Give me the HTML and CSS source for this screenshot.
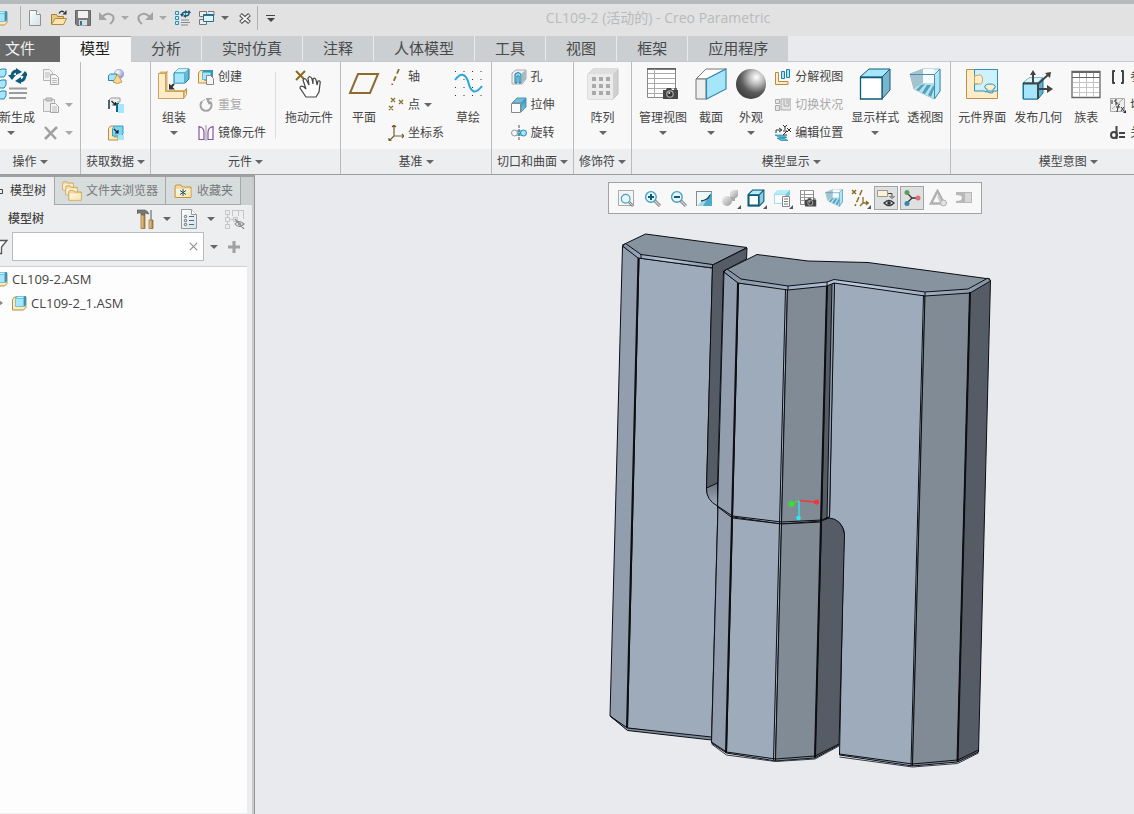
FILE: index.html
```
<!DOCTYPE html>
<html lang="zh-CN">
<head>
<meta charset="utf-8">
<title>CL109-2 (活动的) - Creo Parametric</title>
<link rel="stylesheet" href="styles.css">
</head>
<body>
<svg class="defs" aria-hidden="true">
  <defs>
    <linearGradient id="gFace" x1="0" y1="0" x2="1" y2="1"><stop offset="0" stop-color="#d3f3fd"/><stop offset="1" stop-color="#6fd0f0"/></linearGradient>
    <linearGradient id="gSide" x1="0" y1="0" x2="0" y2="1"><stop offset="0" stop-color="#2b8fb8"/><stop offset="1" stop-color="#8cc9e0"/></linearGradient>
    <linearGradient id="gGrey" x1="0" y1="0" x2="1" y2="1"><stop offset="0" stop-color="#f5f5f5"/><stop offset="1" stop-color="#9a9a9a"/></linearGradient>
    <linearGradient id="gPaper" x1="0" y1="0" x2="1" y2="1"><stop offset="0" stop-color="#fff"/><stop offset="1" stop-color="#cfe2ea"/></linearGradient>
    <linearGradient id="gWood" x1="0" y1="0" x2="1" y2="0"><stop offset="0" stop-color="#f4d9a2"/><stop offset="1" stop-color="#a8762f"/></linearGradient>
    <linearGradient id="gCream" x1="0" y1="0" x2="1" y2="1"><stop offset="0" stop-color="#fff8e6"/><stop offset="1" stop-color="#ffe1a0"/></linearGradient>
    <radialGradient id="gBall" cx=".68" cy=".28" r=".8"><stop offset="0" stop-color="#fff"/><stop offset=".25" stop-color="#c8c8c8"/><stop offset=".65" stop-color="#5a5a5a"/><stop offset="1" stop-color="#3c3c3c"/></radialGradient>
    <radialGradient id="gOrb" cx=".35" cy=".3" r=".8"><stop offset="0" stop-color="#fff"/><stop offset="1" stop-color="#7d88cc"/></radialGradient>
    <linearGradient id="gBevel" x1="0" y1="0" x2="1" y2="0"><stop offset="0" stop-color="#8391a5"/><stop offset=".5" stop-color="#bccbe2"/><stop offset="1" stop-color="#8592a5"/></linearGradient>
    <linearGradient id="gFillet" x1="0" y1="0" x2="0" y2="1"><stop offset="0" stop-color="#6c7480"/><stop offset="1" stop-color="#a0acbb"/></linearGradient>
    <symbol id="asm" viewBox="0 0 16 16"><path d="M1.500 4.500l2-2.500H15v10.500l-2.500 2.500h-11z" fill="#ffe9bd" stroke="#b98d3e"/><path d="M4 3l2-2h9v9l-2 2z" fill="#3a93b8"/><path d="M4.500 3.500h8v8h-8z" fill="#a5e6fb" stroke="#6fc6e2"/><path d="M5 3l1.500-1.500h7L12 3z" fill="#c9f2ff"/></symbol>
    <symbol id="cube" viewBox="0 0 16 16"><path d="M1 5l4-4h10v10l-4 4H1z" fill="#8ccbe0" stroke="#0f5a78"/><path d="M1.500 5.500h9v9h-9z" fill="#fff" stroke="#0f5a78" stroke-width="1.500"/><path d="M2.500 4.500l3-3h8l-3 3z" fill="#b5ecff"/><path d="M11 5l4-4" stroke="#0f5a78"/></symbol>
    <symbol id="camera" viewBox="0 0 16 12"><path d="M0 3h3l1-2h4l1 2h6v9H0z" fill="#474747"/><path d="M11 1h3v2h-3z" fill="#666"/><circle cx="7" cy="7" r="3.800" fill="#aaa"/><circle cx="7" cy="7" r="2.600" fill="#333"/><circle cx="6.300" cy="6" r="1" fill="#ddd"/></symbol>
    <symbol id="persp" viewBox="0 0 32 32"><path d="M1 6L14 1h17v22l-6 8-16-8-4-2z" fill="#e4f4f9" stroke="#8dbccb"/><path d="M1 6l13-5v14L5 21z" fill="#a5c3ce"/><path d="M14 1h11v14H14z" fill="#f6fbfd"/><path d="M5 21l9-6h14l-3 16z" fill="#b7dfec"/><path d="M12 17l-5 5 3 1 6-7zM18 17l-5 8 3 1 6-9zM24 18l-5 9 3 2 4-11z" fill="#4fa2bf"/><path d="M25 8l6-6v21l-6 8z" fill="#a9e0f2" opacity=".8"/><path d="M1 6.500h24.500V31L31 23V1L25.500 6.500" stroke="#3f90ae" fill="none"/></symbol>
    <symbol id="copy" viewBox="0 0 16 16"><path d="M.5.500h6l3 3v8h-9z" fill="#f4f4f4" stroke="#b5b5b5"/><path d="M2 4h5M2 6h5M2 8h4" stroke="#bbb"/><path d="M7.500 5.500h5l3 3v7h-8z" fill="#f4f4f4" stroke="#a6a6a6"/><path d="M9 9.500h5M9 11.500h5M9 13.500h5" stroke="#bbb"/></symbol>
    <symbol id="mag" viewBox="0 0 16 16"><path d="M10 10l5 5" stroke="#8a8a8a" stroke-width="3"/><path d="M10 10l5 5" stroke="#ddd"/><circle cx="6.500" cy="6.500" r="5" fill="#e3f6fc" stroke="#4a9dbb" stroke-width="1.300"/></symbol>
    <symbol id="folder" viewBox="0 0 18 14"><path d="M1 13V1.500L2 .5h5l1.500 2H17V13z" fill="#f3d9a2" stroke="#c19746"/><path d="M2 12.500V4.500h14.500v8z" fill="url(#gCream)"/></symbol>
  </defs>
</svg>
<div class="app">
  <header class="titlebar">
    <div class="quick">
      <svg class="i16"><use href="#asm"/></svg>
      <span class="vline"></span>
      <button aria-label="新建"><svg class="i16" viewBox="0 0 16 16"><path d="M2.500.500h7l4 4v11h-11z" fill="url(#gPaper)" stroke="#8f8f8f"/><path d="M9.500.500v4h4" fill="#fff" stroke="#8f8f8f"/></svg></button>
      <button aria-label="打开"><svg class="i16" viewBox="0 0 16 16"><path d="M.5 14V4.500h5l1 2h6V9" fill="#e9c988" stroke="#a8812f"/><path d="M.5 14.500L4 8.500h11.500l-3 6z" fill="#ffe4ad" stroke="#b18a3d"/><path d="M8 3.500Q10 0 13 2" fill="none" stroke="#333" stroke-width="1.300"/><path d="M15.500 0v4.500h-4z" fill="#333"/></svg></button>
      <button aria-label="保存"><svg class="i16" viewBox="0 0 16 16"><path d="M.5.500h15v15H2l-1.500-1.500z" fill="#7c7c7c" stroke="#666"/><path d="M3 1h10v7H3z" fill="#f1f1f1"/><path d="M4 10h8v5.500H4z" fill="#d4dfe3"/><path d="M5 11h2v4H5z" fill="#34748d"/></svg></button>
      <button aria-label="撤消" class="split"><svg class="i16" viewBox="0 0 16 16"><path d="M3 7Q9 1 14 6q2 4-3 8" fill="none" stroke="#a3a3a3" stroke-width="2"/><path d="M0 2v8h8z" fill="#a3a3a3"/></svg><i class="arrow light"></i></button>
      <button aria-label="重做" class="split"><svg class="i16" viewBox="0 0 16 16"><path d="M13 7Q7 1 2 6q-2 4 3 8" fill="none" stroke="#a3a3a3" stroke-width="2"/><path d="M16 2v8H8z" fill="#a3a3a3"/></svg><i class="arrow light"></i></button>
      <button aria-label="重新生成"><svg class="i16" viewBox="0 0 16 16"><g fill="#c8f0fb" stroke="#2a8fb5"><path d="M.5 1.500h3v3h-3zM.5 6.500h3v3h-3zM.5 11.500h3v3h-3z"/></g><path d="M6 10h8M6 12.500h9M6 15h7" stroke="#888"/><path d="M7 5q0-3 4-3M14 3q0 3-4 3" stroke="#11597a" stroke-width="1.500" fill="none"/><path d="M10 0l3 2-3 2zM11 4v4L8 6zM5 4h4L7 7zM12 3h4l-2-3z" fill="#11597a"/></svg></button>
      <button aria-label="窗口" class="split"><svg class="i16" viewBox="0 0 16 16"><path d="M.5 1.500h7v5h-7zM.5 9.500h7v5h-7zM9 1.500h6v4" fill="#eee" stroke="#777"/><path d="M4.500 4.500h10v7h-10z" fill="#d9f5fd" stroke="#2b6f8a"/><path d="M4.500 5h10" stroke="#2b6f8a" stroke-width="2"/></svg><i class="arrow"></i></button>
      <button aria-label="关闭"><svg class="i16" viewBox="0 0 16 16"><path d="M3.500 4.500l9 8M12.500 4.500l-9 8" stroke="#444" stroke-width="4"/><path d="M4 5l8 7M12 5l-8 7" stroke="#f3f3f3" stroke-width="2"/></svg></button>
      <span class="vline near"></span>
      <button aria-label="自定义快速访问工具栏" class="custom"><i class="arrow"></i></button>
    </div>
    <h1>CL109-2 (活动的) - Creo Parametric</h1>
  </header>

  <nav class="tabs">
    <button class="file">文件</button><button class="active">模型</button><button>分析</button><button>实时仿真</button><button>注释</button><button>人体模型</button><button>工具</button><button>视图</button><button>框架</button><button>应用程序</button>
  </nav>

  <section class="ribbon">
    <div class="group">
      <div class="tools">
        <button class="big"><svg class="i32" viewBox="0 0 32 32"><g fill="#a5e6fb" stroke="#2788af"><path d="M8 3l2-2h5v5l-2 3H8zM8 14l2-2h5v5l-2 3H8zM8 25l2-2h5v5l-2 3H8z" transform="translate(-4)"/></g><path d="M17 7q1-4 5-4M30 8q-1 5-5 5" fill="none" stroke="#0f5a78" stroke-width="3"/><path d="M21 0l6 4-6 3zM26 9v7l-6-3zM13 7h8l-4 5zM26 8h8l-4-5z" fill="#0f5a78"/><path d="M14 20.500h19M14 25h19M14 30h17" stroke="#9b9b9b" stroke-width="2"/></svg><span>重新生成</span><i class="arrow"></i></button>
        <div class="stack">
          <button aria-label="复制"><svg class="i16"><use href="#copy"/></svg></button>
          <button aria-label="粘贴" class="split"><svg class="i16" viewBox="0 0 16 16"><path d="M.5 2.500h11v12H.5z" fill="#eee" stroke="#b5b5b5"/><path d="M3 1h6v3H3z" fill="#ccc" stroke="#aaa"/><path d="M7.500 6.500h5l3 3v6h-8z" fill="#f4f4f4" stroke="#a6a6a6"/><path d="M9 10h5M9 12h5M9 14h5" stroke="#bbb"/></svg><i class="arrow light"></i></button>
          <button aria-label="删除" class="split"><svg class="i16" viewBox="0 0 16 16"><path d="M2 2l11 12M14 2L2 14" stroke="#a0a0a0" stroke-width="2.500"/></svg><i class="arrow light"></i></button>
        </div>
      </div>
      <button class="caption">操作<i class="arrow"></i></button>
    </div>
    <div class="group">
      <div class="tools center">
        <div class="stack">
          <button aria-label="用户定义特征"><svg class="i16" viewBox="0 0 16 16"><circle cx="11" cy="5" r="4.700" fill="url(#gOrb)" stroke="#8d95cc" stroke-width=".6"/><path d="M.5 6.500l2-1.500h6v5L7 11.500H.5z" fill="#a5e6fb" stroke="#2788af"/><path d="M9.500 5L5 13q4 3 9 0z" fill="#f6d793" stroke="#b98d3e" stroke-width=".8"/></svg></button>
          <button aria-label="复制几何"><svg class="i16" viewBox="0 0 16 16"><path d="M1 12V3l2-2h9v4H9" fill="#eee" stroke="#999"/><path d="M1 3v9" stroke="#29434f" stroke-width="1.500"/><path d="M3.500 4l4 4M7.500 5v3h-3" stroke="#222" stroke-width="1.200" fill="none"/><path d="M8 6h3v9H8z" fill="#0e6587"/><path d="M10 7h6v9h-6z" fill="#a5e6fb"/></svg></button>
          <button aria-label="收缩包络"><svg class="i16" viewBox="0 0 16 16"><path d="M.5 3.500l2-2.500h4v11H10v3H.5z" fill="#ffeac4" stroke="#b98d3e"/><path d="M4.500 3.500l2-2.500H15v8l-2 2H4.500z" fill="#7bd6f2" stroke="#3d9cbe"/><path d="M6 4l4 4M10 5v3H7" stroke="#222" stroke-width="1.200" fill="none"/><path d="M10 10h6v5h-6z" fill="#a5e6fb"/></svg></button>
        </div>
      </div>
      <button class="caption">获取数据<i class="arrow"></i></button>
    </div>
    <div class="group">
      <div class="tools">
        <button class="big"><svg class="i32" viewBox="0 0 32 32"><path d="M.5 5.500l2-2h7v18.500H28l-2 9H.5z" fill="#d9b26a"/><path d="M.5 5.500h7v18h18v7H.5z" fill="#ffecc6" stroke="#c9a45f"/><path d="M7.500 5.500l2-2M25.500 23.500l3-3v6l-3 4" fill="none" stroke="#bb9144"/><path d="M16 5l4-4h11v10l-4 4H16z" fill="#6bb7d2" stroke="#1d7898"/><path d="M16.500 5h10v10h-10z" fill="#a5e6fb" stroke="#4bb6d8"/><path d="M17 4l3-3h10l-3 3z" fill="#c9f2ff"/><path d="M16 16l-4 4" stroke="#333" stroke-width="2"/><path d="M11 15.500v6h6z" fill="#333"/></svg><span>组装</span><i class="arrow"></i></button>
        <div class="stack">
          <button><svg class="i16" viewBox="0 0 16 16"><path d="M.5 4l2-2.500h4v10H9V14H.5z" fill="#ffeac4" stroke="#b98d3e"/><path d="M4 3l2-2h9v8l-2 2H4z" fill="#3a93b8"/><path d="M4.500 3.500h8v7h-8z" fill="#a5e6fb" stroke="#5fbcdb"/><path d="M8.500 6.500h4l3 3v6h-7z" fill="#f5f5f5" stroke="#888"/></svg>创建</button>
          <button class="off"><svg class="i16" viewBox="0 0 16 16"><path d="M4 4.500A5.500 5.500 0 1 0 12 4.500" fill="none" stroke="#a3a3a3" stroke-width="2"/><path d="M8 1h6v1.500h-3L12.500 7l-2 .5L8.500 3z" fill="#a3a3a3"/><path d="M4 5q1-2 3-2.500" fill="none" stroke="#b5b5b5"/></svg>重复</button>
          <button><svg class="i16" viewBox="0 0 16 16"><path d="M1 1.500q5 1 5 6v7H1zM15 1.500q-5 1-5 6v7h5z" fill="#fff" stroke="#8a52a5" stroke-width="1.200"/><path d="M8 0v16" stroke="#999"/></svg>镜像元件</button>
        </div>
        <span class="inner"></span>
        <button class="big"><svg class="i32" viewBox="0 0 32 32"><path d="M3 3l9 9M12 3l-9 9" stroke="#8a6c1f" stroke-width="2"/><path d="M13 29L7 20q0-3 4-1l2 2-3-9q2-3 4 1l2 4-1-7q2-3 4 1l1 5v-5q2-2 3 1l1 5 1-4q3-1 2 3l-1 8-3 5z" fill="#fff" stroke="#444" stroke-width="1.200"/></svg><span>拖动元件</span></button>
      </div>
      <button class="caption">元件<i class="arrow"></i></button>
    </div>
    <div class="group">
      <div class="tools">
        <button class="big"><svg class="i32" viewBox="0 0 32 32"><path d="M10 6h20l-8 19H2z" fill="none" stroke="#8c6b2c" stroke-width="2"/></svg><span>平面</span></button>
        <div class="stack">
          <button><svg class="i16" viewBox="0 0 16 16"><path d="M11 0L4 16" stroke="#8a6c2a" stroke-width="1.800" stroke-dasharray="5 3"/></svg>轴</button>
          <button><svg class="i16" viewBox="0 0 16 16"><path d="M3 1l4 4M7 1L3 5M11 3l4 4M15 3l-4 4M1 9l4 4M5 9l-4 4" stroke="#8a6c2a" stroke-width="1.300"/></svg>点<i class="arrow"></i></button>
          <button><svg class="i16" viewBox="0 0 16 16"><path d="M6 0v11h10M6 11l-5 5M4 2l2-2 2 2M14 9l2 2-2 2M1 13v3h3" fill="none" stroke="#71602f" stroke-width="1.200"/></svg>坐标系</button>
        </div>
        <button class="big"><svg class="i32" viewBox="0 0 32 32"><path d="M3 3.500h28M3 11.500h28M3 19.500h28M3 27.500h28" stroke="#333" stroke-dasharray="1 7.500"/><path d="M3 12Q11 1 16 13q4 18 14 5" fill="none" stroke="#29a7db" stroke-width="2"/></svg><span>草绘</span></button>
      </div>
      <button class="caption">基准<i class="arrow"></i></button>
    </div>
    <div class="group">
      <div class="tools center">
        <div class="stack">
          <button><svg class="i16" viewBox="0 0 16 16"><path d="M1 4l4-3h10v9l-4 5H1z" fill="#eee" stroke="#aaa"/><path d="M11 4l4-3v9l-4 4z" fill="#a8bcc4"/><path d="M4 5q3-3 6 0v9H8V7H6v7H4z" fill="#8be0f7" stroke="#15789c"/></svg>孔</button>
          <button><svg class="i16" viewBox="0 0 16 16"><path d="M1 6l5-5h9L10 6z" fill="#73bddb" stroke="#4797b6"/><path d="M10 6l5-5v9l-5 5z" fill="url(#gSide)" stroke="#4797b6"/><path d="M.5 6.500h9v9h-9z" fill="#fafafa" stroke="#888"/></svg>拉伸</button>
          <button><svg class="i16" viewBox="0 0 16 16"><path d="M3 5h10v6H3z" fill="#72c7e2"/><circle cx="3.500" cy="8" r="3" fill="#f5f5f5" stroke="#8b9ba2"/><circle cx="12.500" cy="8" r="3" fill="#a5e6fb" stroke="#2788af"/><path d="M8 0v16" stroke="#555" stroke-dasharray="3 1"/></svg>旋转</button>
        </div>
      </div>
      <button class="caption">切口和曲面<i class="arrow"></i></button>
    </div>
    <div class="group">
      <div class="tools center">
        <button class="big"><svg class="i32" viewBox="0 0 32 32"><path d="M1 6l5-5h25v25l-5 5H1z" fill="#d0d0d0" stroke="#c0c0c0"/><path d="M1 6h25v25H1z" fill="#ebebeb"/><path d="M1 6l5-5h25l-5 5z" fill="#dfdfdf"/><g fill="#a9a9a9"><path d="M5 9h4v4H5zM12 9h4v4h-4zM19 9h4v4h-4zM5 16h4v4H5zM12 16h4v4h-4zM19 16h4v4h-4zM5 23h4v4H5zM12 23h4v4h-4zM19 23h4v4h-4z"/></g></svg><span>阵列</span><i class="arrow"></i></button>
      </div>
      <button class="caption">修饰符<i class="arrow"></i></button>
    </div>
    <div class="group">
      <div class="tools">
        <button class="big"><svg class="i32" viewBox="0 0 32 32"><path d="M.5.500h28v29H.5z" fill="#fff" stroke="#888"/><path d="M0 1h29" stroke="#555" stroke-width="1.500"/><path d="M1 5.500h27M1 10.500h27M1 15.500h27M1 20.500h27M1 25.500h27M7.500 1v29" stroke="#aaa"/><use href="#camera" x="16" y="18" width="16" height="14"/></svg><span>管理视图</span><i class="arrow"></i></button>
        <button class="big"><svg class="i32" viewBox="0 0 32 32"><path d="M1 11L11 1h20L12 11z" fill="#fff" stroke="#777"/><path d="M1 11h10v20H1z" fill="#eee" stroke="#777"/><path d="M11.500 11L31 1v20L11.500 31z" fill="#a5e6fb" stroke="#3289ab" stroke-width="1.200"/></svg><span>截面</span><i class="arrow"></i></button>
        <button class="big"><svg class="i32" viewBox="0 0 32 32"><circle cx="16" cy="16" r="15" fill="url(#gBall)"/></svg><span>外观</span><i class="arrow"></i></button>
        <div class="stack">
          <button><svg class="i16" viewBox="0 0 16 16"><path d="M.5 3.500h3v9H13v3H.5z" fill="#ffeac4" stroke="#b98d3e"/><path d="M6.500 2.500h3v7h-3zM11.500.500h3v8h-3z" fill="#a5e6fb" stroke="#1f7ea2"/></svg>分解视图</button>
          <button class="off"><svg class="i16" viewBox="0 0 16 16"><path d="M.5 2.500h4v4h-4zM.5 8.500h4v5h-4zM6 2h10v11H6z" fill="#e5e5e5" stroke="#aaa"/><path d="M9 3v6h5V3M12 3v4" fill="none" stroke="#aaa"/></svg>切换状况</button>
          <button><svg class="i16" viewBox="0 0 16 16"><path d="M1 8V5h5M4 3l3 2-3 2" fill="none" stroke="#333"/><path d="M8 0l2 2 2-2M10 2v3M12 3l4 4M16 3l-4 4M8 6h4l-4 4h4" fill="none" stroke="#333"/><path d="M0 10h7l5 2.500H5zM2 13h7l4 2.500H6z" fill="#52bddd" stroke="#1e7594" stroke-width=".6"/></svg>编辑位置</button>
        </div>
        <button class="big"><svg class="i32" viewBox="0 0 32 32"><path d="M1 9l9-8h21l-8 8z" fill="#a5e6fb" stroke="#0f5a78"/><path d="M23 9l8-8v21l-8 9z" fill="#7bb4cb" stroke="#0f5a78"/><path d="M1.500 9.500H23V31H1.500z" fill="#fff" stroke="#0f5a78" stroke-width="1.300"/></svg><span>显示样式</span><i class="arrow"></i></button>
        <button class="big"><svg class="i32"><use href="#persp"/></svg><span>透视图</span></button>
      </div>
      <button class="caption">模型显示<i class="arrow"></i></button>
    </div>
    <div class="group">
      <div class="tools">
        <button class="big"><svg class="i32" viewBox="0 0 32 32"><path d="M.5 1.500h31v29H.5z" fill="#ffedc9" stroke="#ba914a"/><path d="M8.500 1.500h23V23H28q-2 1-1 1.500-2 1-4 0-2-1.500-4-.5 1-1-1-1H8.500v-7q3 0 4-.5-3-1-4-9z" fill="#cdf1fd" stroke="#2d91b3"/><path d="M8.500 8q1 0 4-1 4-1 4 4.500t-4 4.500q-2-1-4 0z" fill="#ffedc9" stroke="#c9a45f"/><path d="M21 23q1-2-2-3-1-4 5-4t5 4q-3 1-2 3z" fill="#ffedc9" stroke="#2d91b3"/></svg><span>元件界面</span></button>
        <button class="big"><svg class="i32" viewBox="0 0 32 32"><path d="M1 15l6-5h14v15l-5 6H1z" fill="#5bb4d3" stroke="#17779a"/><path d="M2 14l5-4h13l-4 4z" fill="#d7f5fd"/><path d="M1.500 15.500H16V31H1.500z" fill="#a5e6fb" stroke="#17779a"/><path d="M11 15V5M16 16L27 6M16 21h11M1 15.500h15V31" fill="none" stroke="#444" stroke-width="2"/><path d="M8 7l3-5 3 5zM29 4l-1 6-5-5zM25 17l6 4-6 4z" fill="#444"/></svg><span>发布几何</span></button>
        <button class="big"><svg class="i32" viewBox="0 0 32 32"><path d="M2 3.500h28v26H2z" fill="#fff" stroke="#666" stroke-width="1.300"/><path d="M3 14.500h26M3 19.500h26M3 24.500h26M9.500 10v19M16.500 10v19M23.500 10v19" stroke="#c5c5c5"/><path d="M2 4h28" stroke="#666" stroke-width="2"/><path d="M2 9.500h28" stroke="#666"/><path d="M9.500 5v4M16.500 5v4M23.500 5v4" stroke="#999"/></svg><span>族表</span></button>
        <div class="stack">
          <button><svg class="i16" viewBox="0 0 16 16"><path d="M5 2H3v12h2M11 2h2v12h-2" fill="none" stroke="#444" stroke-width="2" stroke-linejoin="round"/></svg>参数</button>
          <button><svg class="i16" viewBox="0 0 16 16"><path d="M.5 1.500h14v13H.5z" fill="#eee" stroke="#aaa"/><path d="M2 12L13 2" stroke="#aaa"/><path d="M2 3v4M7 3H5v2q3 0 2 2H5M10 7q-2 0-2 3l-1 5M6 10h4M11 10l3 4M14 10l-3 4" fill="none" stroke="#333"/><path d="M16 13v3h-3z" fill="#225"/></svg>切换尺寸</button>
          <button><svg class="i16" viewBox="0 0 16 16"><path d="M6.500 1v13" stroke="#444" stroke-width="2"/><circle cx="4" cy="10" r="3" fill="none" stroke="#444" stroke-width="2"/><path d="M9 8h6M9 12h6" stroke="#444" stroke-width="2"/></svg>关系</button>
        </div>
      </div>
      <button class="caption">模型意图<i class="arrow"></i></button>
    </div>
  </section>

  <main class="work">
    <aside class="panel">
      <div class="ptabs">
        <button class="active"><svg class="mark" viewBox="0 0 8 8"><path d="M2.500 2.500h4v4h-4z" fill="none" stroke="#444"/></svg>模型树</button>
        <button><svg class="i20" viewBox="0 0 20 20"><use href="#folder" x="0" y="0" width="12" height="10"/><use href="#folder" x="3" y="4" width="13" height="11"/><use href="#folder" x="6" y="9" width="14" height="11"/></svg>文件夹浏览器</button>
        <button><svg class="i20" viewBox="0 0 20 20"><use href="#folder" x="1" y="3" width="18" height="15"/><path d="M10 8v7M7 9.500l6 4M13 9.500l-6 4" stroke="#0f5a78"/></svg>收藏夹</button>
      </div>
      <div class="pbar">
        <h2>模型树</h2>
        <button class="split" aria-label="设置"><svg class="i20" viewBox="0 0 20 20"><path d="M0 1h8q3 1 4 4L8 4v2H4V4H1L0 5z" fill="#777" stroke="#555" stroke-width=".6"/><path d="M4 6h4v13.500H4z" fill="url(#gWood)" stroke="#8b6427" stroke-width=".7"/><path d="M14 1v10" stroke="#888" stroke-width="1.500"/><path d="M12 11h4v8.500h-4z" fill="url(#gWood)" stroke="#8b6427" stroke-width=".7"/></svg><i class="arrow"></i></button>
        <button class="split" aria-label="显示"><svg class="i20" viewBox="0 0 20 20"><path d="M.5.500h10l5 5v14H.5z" fill="url(#gPaper)" stroke="#9a9a9a"/><path d="M10.500.500v5h5" fill="#fff" stroke="#9a9a9a"/><g fill="none" stroke="#666"><circle cx="4.500" cy="7.500" r="1.200"/><circle cx="4.500" cy="11.500" r="1.200"/><circle cx="4.500" cy="15.500" r="1.200"/><path d="M8 7.500h5M8 11.500h5M8 15.500h5"/></g></svg><i class="arrow"></i></button>
        <button aria-label="隐藏"><svg class="i20" viewBox="0 0 20 20"><g fill="none" stroke="#c5c5c5"><path d="M.5 1.500h4v4h-4zM.5 8.500h4v4h-4zM.5 15.500h4v4h-4zM8.500 8.500h4v4h-4z"/><path d="M2.500 5v3M2.500 12v3M5 10.500h3M7 1.500h12M7.500 1v6M13.500 1v6M18.500 1v9"/></g><path d="M10 15q4-5 9 0-5 5-9 0zM10 10l9 10" fill="none" stroke="#8a8a8a" stroke-width="1.200"/><circle cx="14.500" cy="15" r="1.800" fill="#999"/></svg></button>
      </div>
      <div class="filter">
        <svg class="i16" viewBox="0 0 16 16"><path d="M1 1.500h14L9.500 8v6.500h-3V8z" fill="#fff" stroke="#555" stroke-width="1.300"/></svg>
        <div class="field"><input type="text" aria-label="过滤模型树"><button aria-label="清除"><svg viewBox="0 0 10 10"><path d="M1 1l8 8M9 1L1 9" stroke="#8f8f8f" stroke-width="1.300"/></svg></button></div>
        <button class="drop" aria-label="过滤选项"><i class="arrow"></i></button>
        <button aria-label="添加"><svg class="plus" viewBox="0 0 12 12"><path d="M6 0v12M0 6h12" stroke="#a0a0a0" stroke-width="3"/></svg></button>
      </div>
      <ul class="tree">
        <li><svg class="i16"><use href="#asm"/></svg>CL109-2.ASM</li>
        <li class="child"><i class="expand"></i><svg class="i16"><use href="#asm"/></svg>CL109-2_1.ASM</li>
      </ul>
    </aside>
    <section class="canvas">
      <div class="viewbar">
        <button aria-label="重新调整"><svg class="i18" viewBox="0 0 18 18"><path d="M1.500 1.500h15v15h-15z" fill="#f5f5f5" stroke="#aaa"/><use href="#mag" x="3" y="4" width="14" height="14"/></svg></button>
        <button aria-label="放大"><svg class="i18" viewBox="0 0 18 18"><use href="#mag" x="1" y="1" width="17" height="17"/><path d="M8 5v6M5 8h6" stroke="#0f5a78" stroke-width="2"/></svg></button>
        <button aria-label="缩小"><svg class="i18" viewBox="0 0 18 18"><use href="#mag" x="1" y="1" width="17" height="17"/><path d="M5 8h6" stroke="#0f5a78" stroke-width="2"/></svg></button>
        <button aria-label="重画"><svg class="i18" viewBox="0 0 18 18"><path d="M1 2h16v15H1z" fill="#9fd9ea"/><path d="M2 3h15v2Q14 10 7 12l-5 5z" fill="#eef8fb"/><path d="M17 2v15H8z" fill="#4fa9c9"/><path d="M1 2.500h16M1.500 3v14" stroke="#8a8a8a"/><path d="M15 6Q13 11 6 12" fill="none" stroke="#29434f" stroke-width="1.300"/></svg></button>
        <button aria-label="渲染" class="more"><svg class="i18" viewBox="0 0 18 18"><path d="M9 3l2-2h6v6l-2 2H9z" fill="url(#gGrey)"/><path d="M5 8h9v4H9z" fill="#aaa"/><circle cx="6" cy="12" r="5" fill="url(#gGrey)"/></svg></button>
        <button aria-label="显示样式" class="more"><svg class="i18"><use href="#cube"/></svg></button>
        <button aria-label="已保存方向" class="more"><svg class="i18" viewBox="0 0 18 18"><path d="M1 5l4-4h12v4l-4 10H1z" fill="#75c7e2"/><path d="M1.500 5.500h11v9h-11z" fill="#f8fdff" stroke="#a8dcec"/><path d="M1 5l4-4h12l-4 4z" fill="#b5ecff"/><path d="M9.500 7.500h7v10h-7z" fill="#fff" stroke="#888"/><path d="M11 10h4M11 12.500h4M11 15h4" stroke="#777"/></svg></button>
        <button aria-label="视图管理器"><svg class="i18" viewBox="0 0 18 18"><path d="M1.500 1.500h13v14h-13z" fill="#fff" stroke="#888"/><path d="M1 1.500h14M1 5.500h13M1 8.500h13M1 11.500h13M5.500 2v13" stroke="#999"/><use href="#camera" x="6" y="8" width="12" height="10"/></svg></button>
        <button aria-label="透视图"><svg class="i18"><use href="#persp"/></svg></button>
        <button aria-label="基准显示" class="more"><svg class="i18" viewBox="0 0 18 18"><path d="M1 1l4 4M5 1L1 5M11 1L4 17" fill="none" stroke="#8a6c2a" stroke-width="1.500" stroke-dasharray="5.700 2"/><path d="M12 8v6h6M12 14l-3 3M15 12l2 2-2 2" fill="none" stroke="#8a6c2a" stroke-width="1.300"/></svg></button>
        <button aria-label="注释显示" class="on"><svg class="i18" viewBox="0 0 18 18"><path d="M.5 1.500h10v6H.5z" fill="#fff3d4" stroke="#999"/><path d="M11 4.500h4V8M12.500 7l2.500 2.500L17.500 7" fill="none" stroke="#444"/><path d="M7 14q5-5 10 0-5 5-10 0z" fill="#ddd" stroke="#333" stroke-width="1.300"/><circle cx="12" cy="14" r="1.800" fill="#333"/></svg></button>
        <button aria-label="旋转中心" class="on"><svg class="i18" viewBox="0 0 18 18"><path d="M9 9L4 4M9 9h6M9 9l-5 5" stroke="#333" stroke-width="1.300"/><circle cx="4" cy="3.500" r="2.500" fill="#58a05c"/><circle cx="15" cy="9" r="2.500" fill="#e0706c"/><circle cx="4" cy="14.500" r="2.500" fill="#3486ae"/></svg></button>
        <button aria-label="仿真"><svg class="i18" viewBox="0 0 18 18"><path d="M8.500 2L15 14.500H2z" fill="none" stroke="#b0b0b0" stroke-width="2.500"/><path d="M9 7l3 7" stroke="#ccc" stroke-width="2"/><circle cx="14.500" cy="14" r="3" fill="#e2e2e2" stroke="#b0b0b0"/></svg></button>
        <button aria-label="全屏"><svg class="i18" viewBox="0 0 18 18"><path d="M1 3h16v11H1v-2q6 0 6-3.500Q7 6 1 6z" fill="#b8b8b8"/><path d="M10 4h6v9h-6z" fill="#d8d8d8"/></svg></button>
      </div>
      <svg class="model" viewBox="595 232 400 538" role="img" aria-label="CL109-2">
        <g stroke="#0c0e12" stroke-width="1" stroke-linejoin="round">
          <path d="M622.500 245L645.500 234 747 247.500 712.500 265 640 256z" fill="#87939e"/>
          <path d="M622.500 246L639 258 627.500 729 610 716z" fill="#929dae"/>
          <path d="M639 258L712.500 268 706.500 490Q707 499 718 506L711.500 739 627.500 728z" fill="#9eabbb"/>
          <path d="M712.500 265L747 248 746.500 259 723.500 271 717.500 484 706.500 489z" fill="#565c66"/>
          <path d="M706.500 488L717.500 483V506Q706 500 706.500 488z" fill="url(#gFillet)"/>
          <path d="M622.500 246L625.500 243.500 641 254.500 712.500 264.500V268L638 258z" fill="url(#gBevel)"/>
          <path d="M610 716L627.500 728 711.500 737V740L627.500 730.500z" fill="#7f8b9b"/>
          <path d="M724 271L757 254.500 808 261 868 262.500 990 279 969 291 925 294 834 281 827 284 788 288 739 281z" fill="#87939e"/>
          <path d="M834 282L925 294.500 912.500 766 839.500 755 844 531Q841 520 828.500 518z" fill="#9eabbb"/>
          <path d="M925 295L970 292 957.500 762 912.500 766z" fill="#818b96"/>
          <path d="M970 292L990.500 280 978.500 752 957.500 762z" fill="#565c66"/>
          <path d="M724 272L738.500 283 732.500 518 717.500 508z" fill="#929dae"/>
          <path d="M738.500 283L787.500 289 781.500 524 732.500 517z" fill="#9eabbb"/>
          <path d="M787.500 289L827 285 821.500 521 781.500 524z" fill="#818b96"/>
          <path d="M827 285L834 282 829.500 517 821.500 521z" fill="#565c66"/>
          <path d="M832 284L834.500 283 829.500 517 827 518z" fill="#929dae"/>
          <path d="M718 507L732.500 518 726.500 753 711.500 743z" fill="#929dae"/>
          <path d="M732.500 518L781.500 524 775.500 761 726.500 753z" fill="#9eabbb"/>
          <path d="M781.500 524L821.500 522 815 758 775.500 761z" fill="#818b96"/>
          <path d="M821.500 521L829 518Q842 519 844.500 534L839 745 815 758z" fill="#565c66"/>
          <path d="M724 272L727 269 741 279 788 286 827 282 834 279.500 925 292 968 289 988 278 990.500 281 970 293 925 296 834 283 827 286 788 290 738 283z" fill="url(#gBevel)"/>
          <path d="M717.500 506L732.500 516 781.500 522 821.500 520 829 517M711.500 742L726.500 752 775.500 759 815 756 839 744M839.500 754L912.500 764 957.500 760 978.500 750" fill="none"/>
          <path d="M711.500 744L726.500 755 775.500 761.500 815 759 839 746M839.500 757L912.500 767 957.500 763.500 978.500 753" fill="none" stroke="#333b47"/>
          <path d="M638.500 258L627 728M738 283L726 753M827 286L815 757M970 292L957.500 761" fill="none" stroke-width="2"/>
          <path d="M785.500 289L773.500 760M923.500 295L911 766" fill="none"/>
          <path d="M788 286V290M925 292V296M827 282V286M641 254V258" fill="none"/>
        </g>
        <g fill="none" stroke-width="1.300"><path d="M791 504L799 500.500" stroke="#2ee82e"/><path d="M799 500.500L816 502" stroke="#f23535"/><path d="M799 500.500V518" stroke="#2eeaf2"/></g>
        <circle cx="791.500" cy="504" r="2.800" fill="#2ee82e"/><circle cx="816.500" cy="502" r="2.500" fill="#f23535"/><circle cx="798.500" cy="518" r="2.300" fill="#2eeaf2"/>
      </svg>
    </section>
  </main>
</div>
</body>
</html>
```
FILE: styles.css
```
* { box-sizing: border-box; }
body {
  margin: 0;
  overflow: hidden;
  font-family: "Open Sans", "Noto Sans CJK SC", sans-serif;
  font-size: 12px;
  line-height: 18px;
  color: #444;
  background: #e8eaee;
}
button {
  display: flex;
  align-items: center;
  margin: 0;
  padding: 0;
  border: 0;
  background: none;
  color: inherit;
  font: inherit;
  white-space: nowrap;
}
svg { display: block; flex: none; }
h1, h2, ul { margin: 0; padding: 0; font: inherit; }
.defs { position: absolute; width: 0; height: 0; }
.i16 { width: 16px; height: 16px; }
.i18 { width: 18px; height: 18px; }
.i20 { width: 20px; height: 20px; }
.i32 { width: 32px; height: 32px; }
.arrow {
  flex: none;
  border: 4px solid transparent;
  border-top-color: #666;
  border-bottom: 0;
}
.arrow.light { border-top-color: #a8a8a8; }

/* The window is wider than the screen and runs past both of its sides. */
.app {
  display: flex;
  flex-direction: column;
  width: calc(100vw + 222px);
  height: 100vh;
  margin-left: -20px;
}

.titlebar {
  display: grid;
  grid-template-columns: 1fr auto 1fr;
  align-items: center;
  height: 36px;
  padding-bottom: 4px;
  border-top: 4px solid #b5babd;
  background: #e2e2e2;
}
.titlebar h1 { font-size: 14px; color: #b8babc; }
.quick { display: flex; align-items: center; gap: 8px; height: 28px; padding-left: 12px; }
.quick .split { gap: 6px; }
.vline { width: 1px; height: 24px; margin: 0 -2px 0 4px; background: #b0b0b0; }
.vline.near { margin: 0 0 0 -4px; }
.custom { flex-direction: column; }
.custom::before { content: ""; width: 9px; height: 1px; margin-bottom: 2px; background: #444; }
.custom .arrow { border-top-color: #444; }

.tabs { display: flex; height: 26px; border-bottom: 1px solid #c6c8ca; }
.tabs button {
  height: 25px;
  padding: 0 20px 2px;
  margin-right: 1px;
  background: #cbcfd2;
  color: #4a4a4a;
  font-size: 15px;
}
.tabs .file { height: 26px; margin: 0; padding: 0 25px 3px; background: #686868; color: #f2f2f2; }
.tabs .active { height: 26px; margin: 0; padding: 0 21px 3px 20px; background: #f8f8f8; border-top: 1px solid #a2a2a2; color: #222; }

.ribbon { display: flex; height: 113px; border-bottom: 1px solid #9c9c9c; background: #eceef0; }
.group { display: flex; flex-direction: column; flex: none; border-right: 1px solid #b9bcbe; }
.tools { display: flex; height: 87px; padding: 0 3px; background: #f8f8f8; }
.tools.center { justify-content: center; }
.big { flex-direction: column; min-width: 40px; padding: 6px 4px 0; }
.big span { margin-top: 9px; }
.big .arrow { margin-top: 4px; }
.stack { display: grid; grid-template-rows: repeat(3, 28px); margin: 1px 4px 0; }
.stack button { gap: 4px; }
.stack .split { gap: 6px; }
.off { color: #a9a9a9; }
.inner { width: 1px; height: 67px; margin: 10px 5px 0; background: #dedede; }
.caption { justify-content: center; gap: 3px; flex: 1; padding: 0 5px; }

.work { display: flex; flex: 1; min-height: 0; }
.panel {
  display: flex;
  flex-direction: column;
  width: 275px;
  flex: none;
  border-top: 2px solid #a0a0a0;
  border-right: 1px solid #969696;
  box-shadow: inset -2px 0 #c8cacc;
  background: #eceef0;
}
.ptabs { display: flex; height: 28px; margin-right: 2px; background: #cdd0d1; }
.ptabs button {
  gap: 4px;
  padding: 0 7px;
  border: solid #a5a7a8;
  border-width: 0 1px 1px 0;
  background: #d7dcdd;
  color: #77797c;
}
.ptabs .active { gap: 6px; padding-left: 16px; padding-right: 8px; border-bottom: 0; background: #eceef0; color: #3a3a3a; }
.mark { width: 8px; height: 8px; }
.pbar { display: flex; align-items: center; gap: 10px; height: 27px; padding: 0 9px 0 28px; }
.pbar h2 { flex: 1; font-weight: 500; }
.pbar .split { gap: 6px; }
.filter { display: flex; align-items: center; gap: 4px; height: 32px; padding: 0 14px 3px 12px; }
.field { display: flex; flex: 1; height: 29px; padding-right: 5px; border: 1px solid #b9bcbe; background: #fff; }
.field input { flex: 1; min-width: 0; border: 0; background: none; font: inherit; }
.field svg { width: 9px; height: 9px; }
.drop { margin: 0 6px 0 2px; }
.plus { width: 12px; height: 12px; }
.tree { flex: 1; margin: 2px 7px 1px 0; padding-left: 12px; border-top: 1px solid #cfd1d2; background: #fdfdfd; font-size: 13px; list-style: none; }
.tree li { display: flex; align-items: center; gap: 4px; height: 24px; }
.tree .child { padding-left: 7px; }
.expand { margin-right: 4px; border: 3px solid transparent; border-left: 4px solid #888; border-right: 0; }

.canvas { display: flex; flex-direction: column; align-items: center; flex: 1; padding-right: 2px; background: #e8eaee; }
.viewbar {
  display: flex;
  align-items: center;
  gap: 2px;
  height: 32px;
  margin: 7px 0 18px;
  padding: 0 5px;
  border: 1px solid #a2a2a2;
  background: #f8f8f8;
}
.viewbar button { justify-content: center; width: 24px; height: 24px; border: 1px solid transparent; }
.viewbar .on { border-color: #a2a4a6; background: #dfe0e1; }
.more { position: relative; }
.more::after {
  content: "";
  position: absolute;
  right: 0;
  bottom: 0;
  border: 2px solid #555;
  border-top-color: transparent;
  border-left-color: transparent;
}
.model { width: 400px; height: 538px; }
```
